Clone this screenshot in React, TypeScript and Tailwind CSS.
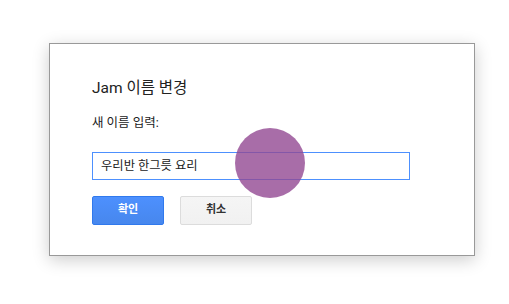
import React from "react";

export default function App() {
  return (
    <div
      className="w-[509px] h-[304px] bg-white pt-[43px] pl-[49px]"
      style={{ fontFamily: "Roboto, 'Noto Sans CJK KR', sans-serif" }}
    >
      <div className="relative w-[426px] h-[213px] border border-[#999] bg-white shadow-[0_4px_16px_rgba(0,0,0,0.2)] pl-[42px] pt-[34px]">
        <div className="text-[15.5px] leading-[20px] text-[#222]">Jam 이름 변경</div>
        <div className="mt-[17px] text-[12.5px] leading-[16px] text-[#222]">새 이름 입력:</div>
        <div className="mt-[21px] w-[318px] h-[28px] border border-[#4d90fe] flex items-center pl-[8px] text-[12.3px] text-[#222]">
          우리반 한그릇 요리
        </div>
        <div className="mt-[16px] flex gap-[16px]">
          <button className="w-[72px] h-[29px] rounded-[2px] border border-[#3079ed] bg-gradient-to-b from-[#4d90fe] to-[#4787ed] text-white text-[11px] font-bold">
            확인
          </button>
          <button className="w-[72px] h-[29px] rounded-[2px] border border-[#dcdcdc] bg-gradient-to-b from-[#f5f5f5] to-[#f1f1f1] text-[#333] text-[11px] font-bold">
            취소
          </button>
        </div>
        <div className="absolute left-[185px] top-[84px] w-[70px] h-[70px] rounded-full bg-[rgba(146,73,146,0.8)]" />
      </div>
    </div>
  );
}
